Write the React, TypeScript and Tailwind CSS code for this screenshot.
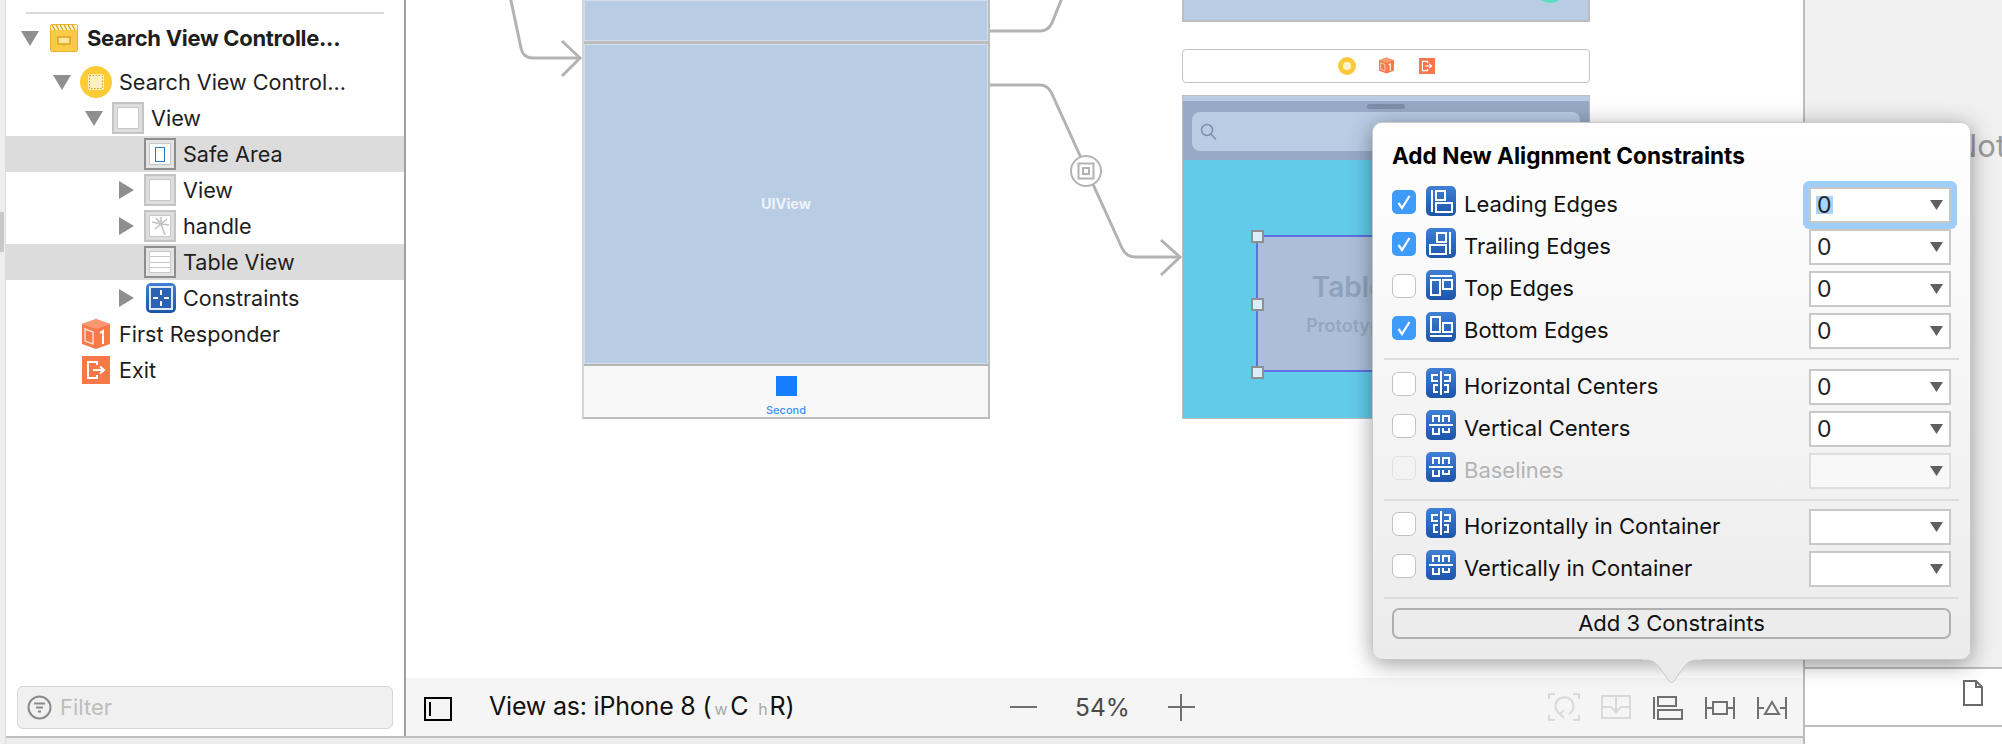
import type { ReactNode } from "react"

const sans = "font-['Inter','Noto_Sans',sans-serif]"

function Tri({ open }: { open: boolean }) {
  return open ? (
    <svg width="18" height="15" viewBox="0 0 18 15" className="block">
      <path d="M0 0H18L9 15Z" fill="#8f8f8f" />
    </svg>
  ) : (
    <svg width="15" height="18" viewBox="0 0 15 18" className="block">
      <path d="M0 0V18L15 9Z" fill="#8f8f8f" />
    </svg>
  )
}

function BoxIcon({ dark, children }: { dark?: boolean; children?: ReactNode }) {
  return (
    <div
      className={`w-[32px] h-[32px] shrink-0 border-2 flex items-center justify-center ${
        dark ? "border-[#8e8e8e] bg-[#e4e4e4]" : "border-[#c4c4c4] bg-[#dedede]"
      }`}
    >
      <div className="w-[22px] h-[22px] bg-white border border-[#c8c8c8] flex items-center justify-center overflow-hidden">
        {children}
      </div>
    </div>
  )
}

function StoryboardIcon() {
  return (
    <svg width="28" height="28" viewBox="0 0 28 28" className="block shrink-0">
      <rect x="0.5" y="0.5" width="27" height="27" rx="2" fill="#fbcb48" stroke="#e9b02e" />
      <rect x="1" y="1" width="26" height="5" fill="#fff3c4" />
      <path d="M2 1l3 5M6 1l3 5M10 1l3 5M14 1l3 5M18 1l3 5M22 1l3 5" stroke="#d99d1e" strokeWidth="1.2" />
      <rect x="8" y="13" width="12" height="7" fill="#fde59a" stroke="#d99d1e" strokeWidth="1.4" />
    </svg>
  )
}

function ControllerIcon() {
  return (
    <svg width="32" height="32" viewBox="0 0 32 32" className="block shrink-0">
      <circle cx="16" cy="16" r="16" fill="#fccb35" />
      <rect x="8" y="8" width="16" height="16" rx="2" fill="#fdf0c0" />
      <rect x="9.5" y="9.5" width="13" height="13" fill="none" stroke="#d9a21a" strokeWidth="1" strokeDasharray="1.5 1.5" />
    </svg>
  )
}

function CubeIcon({ size = 28 }: { size?: number }) {
  return (
    <svg width={size} height={size + 2} viewBox="0 0 28 30" className="block shrink-0">
      <path d="M14 0L28 5V25L14 30L0 25V5Z" fill="#f9794a" />
      <path d="M0 5L14 10L28 5L14 0Z" fill="#fb9a72" />
      <path d="M3 10L11 13V25L3 22Z" fill="none" stroke="#fff" strokeWidth="1.4" opacity="0.75" />
      <path d="M18 14L21 12V25" fill="none" stroke="#fff" strokeWidth="2" />
    </svg>
  )
}

function ExitIcon({ size = 28 }: { size?: number }) {
  return (
    <svg width={size} height={size} viewBox="0 0 28 28" className="block shrink-0">
      <rect width="28" height="28" fill="#f9784a" />
      <path d="M15 9V6H6V22H15V19" fill="none" stroke="#fff" strokeWidth="2" />
      <path d="M11 14H22M18 10.500L22 14L18 17.500" fill="none" stroke="#fff" strokeWidth="2" />
    </svg>
  )
}

function ConstraintsIcon() {
  return (
    <div className="w-[30px] h-[30px] shrink-0 rounded-[5px] bg-gradient-to-b from-[#3f80d6] to-[#1c55a9] flex items-center justify-center">
      <svg width="24" height="24" viewBox="0 0 24 24" className="block">
        <rect x="1" y="1" width="22" height="22" fill="#2a63b6" stroke="#dfe9f6" strokeWidth="2" />
        <path d="M12 4V9M12 15V20M4 12H9M15 12H20" stroke="#fff" strokeWidth="2" />
      </svg>
    </div>
  )
}

type TreeRow = {
  label: string
  indent: number
  tri?: "open" | "closed"
  icon: ReactNode
  iconAt: number
  textAt: number
  selected?: boolean
  bold?: boolean
  h: number
}

const tree: TreeRow[] = [
  { label: "Search View Controlle...", indent: 15, tri: "open", icon: <StoryboardIcon />, iconAt: 44, textAt: 81, bold: true, h: 52 },
  { label: "Search View Control...", indent: 47, tri: "open", icon: <ControllerIcon />, iconAt: 74, textAt: 113, h: 36 },
  { label: "View", indent: 79, tri: "open", icon: <BoxIcon />, iconAt: 106, textAt: 145, h: 36 },
  {
    label: "Safe Area",
    indent: 0,
    icon: (
      <BoxIcon dark>
        <div className="w-[10px] h-[15px] border border-[#2f78bc]" />
      </BoxIcon>
    ),
    iconAt: 138,
    textAt: 177,
    selected: true,
    h: 36,
  },
  { label: "View", indent: 113, tri: "closed", icon: <BoxIcon />, iconAt: 138, textAt: 177, h: 36 },
  {
    label: "handle",
    indent: 113,
    tri: "closed",
    icon: (
      <BoxIcon>
        <svg width="20" height="20" viewBox="0 0 20 20" fill="none" stroke="#c2c2c2" strokeWidth="1.600">
          <path d="M11 8L2 6M11 8L6 2M11 8L11 1M11 8L17 3M11 8L19 9M11 8L5 13M11 8L15 19" />
        </svg>
      </BoxIcon>
    ),
    iconAt: 138,
    textAt: 177,
    h: 36,
  },
  {
    label: "Table View",
    indent: 0,
    icon: (
      <BoxIcon dark>
        <div className="w-full h-full flex flex-col justify-evenly">
          <div className="h-px bg-[#c8c8c8]" />
          <div className="h-px bg-[#c8c8c8]" />
          <div className="h-px bg-[#c8c8c8]" />
        </div>
      </BoxIcon>
    ),
    iconAt: 138,
    textAt: 177,
    selected: true,
    h: 36,
  },
  { label: "Constraints", indent: 113, tri: "closed", icon: <ConstraintsIcon />, iconAt: 140, textAt: 177, h: 36 },
  { label: "First Responder", indent: 0, icon: <CubeIcon />, iconAt: 76, textAt: 113, h: 36 },
  { label: "Exit", indent: 0, icon: <ExitIcon />, iconAt: 76, textAt: 113, h: 36 },
]

function Sidebar() {
  return (
    <aside className="w-[400px] shrink-0 bg-white border-r-2 border-r-[#a0a0a0] flex flex-col">
      <div className="h-[2px] bg-[#d8d8d8] mt-[12px] ml-[20px] w-[358px]" />
      <div className="mt-[-2px]">
        {tree.map((r, i) => (
          <div
            key={i}
            className={`relative flex items-center ${r.selected ? "bg-[#dcdcdc]" : ""}`}
            style={{ height: r.h }}
          >
            {r.tri && (
              <div className="absolute" style={{ left: r.indent }}>
                <Tri open={r.tri === "open"} />
              </div>
            )}
            <div className="absolute" style={{ left: r.iconAt }}>
              {r.icon}
            </div>
            <span
              className={`absolute whitespace-nowrap text-[#1e1e1e] ${r.bold ? "text-[22px] font-bold tracking-[-0.3px]" : "text-[21.6px]"}`}
              style={{ left: r.textAt }}
            >
              {r.label}
            </span>
          </div>
        ))}
      </div>
      <div className="mt-auto mx-[11px] mb-[7px] h-[43px] rounded-[6px] bg-[#f0f0f0] border border-[#d6d6d6] flex items-center pl-[9px]">
        <svg width="25" height="25" viewBox="0 0 25 25" className="block shrink-0">
          <circle cx="12.500" cy="12.500" r="11" fill="none" stroke="#8a8a8a" strokeWidth="2" />
          <path d="M7 8.500H18M9 12.500H16M11 16.500H14" stroke="#8a8a8a" strokeWidth="2" />
        </svg>
        <span className="ml-[8px] text-[22px] text-[#bdbdbd]">Filter</span>
      </div>
    </aside>
  )
}

function Handle({ top }: { top: number }) {
  return (
    <div
      className="absolute left-[-7px] w-[13px] h-[13px] bg-[#d8eef9] border-2 border-[#8f8f8f]"
      style={{ top }}
    />
  )
}

function Canvas() {
  return (
    <div className="relative flex-1 bg-white overflow-hidden">
      {/* left scene */}
      <div className="absolute left-[176px] top-[-2px] w-[408px] h-[421px] border-2 border-[#bdbdbd] border-l-[#d4d4d4] flex flex-col">
        <div className="h-[41px] bg-[#b8cce4] border border-[#d2deed]" />
        <div className="h-[3px] bg-[#bdbdbd]" />
        <div className="flex-1 bg-[#b8cce4] border border-[#d2deed] flex items-center justify-center text-[14.5px] font-bold text-[#eef3fa]">
          UIView
        </div>
        <div className="h-[53px] bg-[#f8f8f8] border-t-2 border-t-[#b4b4b4] flex flex-col items-center">
          <div className="mt-[10px] w-[21px] h-[21px] bg-[#167dff]" />
          <span className="mt-[7px] text-[11px] leading-[14px] font-medium text-[#3b92fb]">Second</span>
        </div>
      </div>

      {/* right scene */}
      <div className="absolute left-[776px] top-[-2px] w-[408px] h-[24px] border-2 border-[#bdbdbd] bg-[#b8cce4] overflow-hidden">
        <div className="absolute left-[351px] top-[-27px] w-[30px] h-[30px] rounded-full bg-[#5bdcc0]" />
      </div>
      <div className="absolute left-[776px] top-[49px] w-[408px] h-[34px] rounded-[4px] border border-[#c4c4c4] bg-white">
        <div className="absolute left-[155px] top-[7px] w-[18px] h-[18px] rounded-full border-[5px] border-[#fcc93a] bg-[#fdf3cf]" />
        <div className="absolute left-[196px] top-[7px]">
          <CubeIcon size={15} />
        </div>
        <div className="absolute left-[236px] top-[8px]">
          <ExitIcon size={16} />
        </div>
      </div>
      <div className="absolute left-[776px] top-[95px] w-[408px] h-[324px] border border-[#bdbdbd] flex flex-col">
        <div className="h-[5px] bg-[#b8cce4]" />
        <div className="h-[59px] bg-[#97a9c6] relative">
          <div className="absolute left-[184px] top-[3px] w-[38px] h-[5px] rounded-full bg-[#7e8ea9]" />
          <div className="absolute left-[9px] top-[11px] w-[388px] h-[39px] rounded-[8px] bg-[#b8cce4] flex items-center pl-[8px]">
            <svg width="17" height="18" viewBox="0 0 17 18" className="block">
              <circle cx="7" cy="7" r="5.500" fill="none" stroke="#7f90ab" strokeWidth="1.500" />
              <path d="M11 11L16 16.500" stroke="#7f90ab" strokeWidth="1.500" />
            </svg>
          </div>
        </div>
        <div className="relative flex-1 bg-[#62cbe9]">
          <div className="absolute left-[73px] top-[75px] w-[260px] h-[137px] bg-[#acbfd8] border-2 border-[#5e70e2] flex flex-col items-center justify-center">
            <span className="text-[28px] leading-[34px] font-semibold text-[#8fa2bd]">Table View</span>
            <span className="mt-[11px] text-[18px] leading-[22px] font-semibold text-[#94a7c2]">Prototype Content</span>
            <Handle top={-7} />
            <Handle top={61} />
            <Handle top={129} />
          </div>
        </div>
      </div>

      {/* segues */}
      <svg width="1397" height="678" viewBox="0 0 1397 678" className="absolute left-0 top-0 pointer-events-none">
        <g fill="none" stroke="#b3b3b3" strokeWidth="3">
          <path d="M104 -4L115 48Q117 58 127 58H174" />
          <path d="M156 41L174 58L156 76" />
          <path d="M584 31H634Q642 31 646 23L656 -2" />
          <path d="M584 85H634Q642 85 646 94L716 248Q720 257 730 257H773" />
          <path d="M755 240L774 257L755 275" />
        </g>
        <circle cx="680" cy="171" r="15" fill="#fff" stroke="#b3b3b3" strokeWidth="2" />
        <rect x="672.500" y="163.500" width="15" height="15" fill="none" stroke="#b3b3b3" strokeWidth="2" />
        <rect x="677" y="168" width="6" height="6" fill="none" stroke="#b3b3b3" strokeWidth="2" />
      </svg>
    </div>
  )
}

function ToolIcon({ children }: { children: ReactNode }) {
  return (
    <svg width="32" height="28" viewBox="0 0 32 28" className="block" fill="none" strokeWidth="2">
      {children}
    </svg>
  )
}

function BottomBar() {
  return (
    <div className="h-[58px] shrink-0 bg-[#f5f5f5] flex items-center pl-[18px] pr-[15px] text-[#111]">
      <div className="w-[28px] h-[24px] border-2 border-black pl-[3px] py-[3px] mt-[3px]">
        <div className="w-[2px] h-full bg-black" />
      </div>
      <div className="ml-[37px] w-[320px] text-[25px] tracking-[-0.2px] whitespace-nowrap">
        View as: iPhone 8 (<span className="text-[16px] text-[#a8a8a8] ml-[3px] mr-[3px]">w</span>C
        <span className="text-[16px] text-[#a8a8a8] ml-[10px] mr-[2px]">h</span>R)
      </div>
      <div className="ml-[201px] w-[27px] h-[2px] bg-[#707070]" />
      <span className="ml-[38px] text-[24.5px] text-[#4a4a4a]">54%</span>
      <div className="ml-[38px] relative w-[27px] h-[27px]">
        <div className="absolute left-0 right-0 top-[12px] h-[2px] bg-[#707070]" />
        <div className="absolute top-0 bottom-0 left-[12px] w-[2px] bg-[#707070]" />
      </div>
      <div className="ml-auto flex gap-[20px] items-center">
        <ToolIcon>
          <g stroke="#d9d9d9">
            <path d="M1 6V1H7M25 1H31V6M1 22V27H7M25 27H31V22" />
            <path d="M21 21A9 9 0 1 0 12 21M12 21L16 17M12 21L16 25" />
          </g>
        </ToolIcon>
        <ToolIcon>
          <g stroke="#d9d9d9">
            <rect x="2" y="3" width="28" height="22" />
            <path d="M2 14H11M21 14H30M16 3V18M10 13L16 19L22 13" />
          </g>
        </ToolIcon>
        <ToolIcon>
          <g stroke="#707070">
            <path d="M2 4V26" />
            <rect x="6" y="4" width="18" height="9" />
            <rect x="6" y="17" width="24" height="9" />
          </g>
        </ToolIcon>
        <ToolIcon>
          <g stroke="#707070">
            <path d="M2 4V26M30 4V26M2 15H9M23 15H30" />
            <rect x="9" y="9" width="14" height="12" />
          </g>
        </ToolIcon>
        <ToolIcon>
          <g stroke="#707070">
            <path d="M2 4V26M30 4V26M2 15H8M24 15H30" />
            <path d="M16 9L23 21H9Z" />
          </g>
        </ToolIcon>
      </div>
    </div>
  )
}

function AlignIcon({ kind }: { kind: string }) {
  return (
    <div className="w-[30px] h-[30px] shrink-0 mt-[-1px] rounded-[5px] bg-gradient-to-b from-[#3f80d6] to-[#1c55a9]">
      <svg width="30" height="30" viewBox="0 0 30 30" className="block" fill="none" stroke="#fff" strokeWidth="2">
        {kind === "leading" && (
          <>
            <path d="M6 4V26" />
            <rect x="10" y="5" width="9" height="9" />
            <rect x="10" y="17" width="16" height="9" />
          </>
        )}
        {kind === "trailing" && (
          <>
            <path d="M24 4V26" />
            <rect x="11" y="5" width="9" height="9" />
            <rect x="4" y="17" width="16" height="9" />
          </>
        )}
        {kind === "top" && (
          <>
            <path d="M4 6H26" />
            <rect x="5" y="10" width="9" height="15" />
            <rect x="17" y="10" width="9" height="9" />
          </>
        )}
        {kind === "bottom" && (
          <>
            <path d="M4 24H26" />
            <rect x="5" y="5" width="9" height="15" />
            <rect x="17" y="11" width="9" height="9" />
          </>
        )}
        {kind === "h" && (
          <path d="M15 3V27M12 7H6V13H12M18 7H24V13H18M12 17H8V24H12M18 17H22V24H18" />
        )}
        {kind === "v" && (
          <path d="M3 15H27M7 12V6H13V12M17 12V6H23V12M7 18V24H13V18M17 18V22H23V18" />
        )}
      </svg>
    </div>
  )
}

function Check({ state }: { state: "on" | "off" | "disabled" }) {
  if (state === "on") {
    return (
      <div className="w-[24px] h-[24px] shrink-0 mt-[3px] rounded-[5px] bg-[#3f9bfa] flex items-center justify-center">
        <svg width="16" height="16" viewBox="0 0 16 16">
          <path d="M2.500 9L6 14L13.500 2" fill="none" stroke="#fff" strokeWidth="2.200" />
        </svg>
      </div>
    )
  }
  return (
    <div
      className={`w-[24px] h-[24px] shrink-0 mt-[3px] rounded-[6px] border ${
        state === "off" ? "bg-white border-[#c2c2c2]" : "bg-[#f3f3f3] border-[#dfdfdf]"
      }`}
    />
  )
}

function Field({ value, focused, disabled }: { value?: string; focused?: boolean; disabled?: boolean }) {
  return (
    <div
      className={`relative w-[142px] h-[36px] shrink-0 ml-auto border-2 flex items-center pl-[5px] text-[23px] text-[#222] ${
        disabled ? "bg-[#f8f8f8] border-[#dedede]" : "bg-white border-[#c8c8c8]"
      } ${focused ? "ring-[6px] ring-[#a0ccf8] rounded-[2px] z-10" : ""}`}
    >
      {value && <span className={focused ? "bg-[#a8d1fb] px-[1px] leading-[18px]" : "px-[1px]"}>{value}</span>}
      <svg width="13" height="10" viewBox="0 0 13 10" className="absolute right-[6px] top-[11px]">
        <path d="M0 0H13L6.500 10Z" fill="#5f5f5f" />
      </svg>
    </div>
  )
}

function AlignRow({
  label,
  kind,
  state = "off",
  value,
  focused,
}: {
  label: string
  kind: string
  state?: "on" | "off" | "disabled"
  value?: string
  focused?: boolean
}) {
  const disabled = state === "disabled"
  return (
    <div className="flex items-start h-[36px]">
      <Check state={state} />
      <div className="w-[10px] shrink-0" />
      <AlignIcon kind={kind} />
      <span className={`ml-[8px] text-[22px] leading-[34px] whitespace-nowrap ${disabled ? "text-[#b4b4b4]" : "text-[#111]"}`}>
        {label}
      </span>
      <Field value={value} focused={focused} disabled={disabled} />
    </div>
  )
}

function Sep({ mt, mb }: { mt: string; mb: string }) {
  return <div className={`h-[2px] mx-[-8px] bg-[#dcdcdc] ${mt} ${mb}`} />
}

function Popover() {
  return (
    <div className="absolute left-[1372px] top-[122px] w-[599px] z-20">
      <div className="rounded-[10px] border border-[#c9c9c9] bg-gradient-to-b from-white to-[#ebebeb] shadow-[0_4px_22px_rgba(0,0,0,0.38)] px-[19px] pt-[21px] pb-[20px]">
        <div className="text-[22.6px] leading-[24px] font-bold text-black mb-[19px] whitespace-nowrap">
          Add New Alignment Constraints
        </div>
        <div className="flex flex-col gap-[6px]">
          <AlignRow label="Leading Edges" kind="leading" state="on" value="0" focused />
          <AlignRow label="Trailing Edges" kind="trailing" state="on" value="0" />
          <AlignRow label="Top Edges" kind="top" value="0" />
          <AlignRow label="Bottom Edges" kind="bottom" state="on" value="0" />
        </div>
        <Sep mt="mt-[9px]" mb="mb-[9px]" />
        <div className="flex flex-col gap-[6px]">
          <AlignRow label="Horizontal Centers" kind="h" value="0" />
          <AlignRow label="Vertical Centers" kind="v" value="0" />
          <AlignRow label="Baselines" kind="v" state="disabled" />
        </div>
        <Sep mt="mt-[10px]" mb="mb-[8px]" />
        <div className="flex flex-col gap-[6px]">
          <AlignRow label="Horizontally in Container" kind="h" />
          <AlignRow label="Vertically in Container" kind="v" />
        </div>
        <Sep mt="mt-[10px]" mb="mb-[9px]" />
        <div className="h-[31px] rounded-[7px] border-2 border-[#b0b0b0] flex items-center justify-center text-[22px] text-[#111]">
          Add 3 Constraints
        </div>
      </div>
      <svg width="60" height="26" viewBox="0 0 60 26" className="absolute left-[270px] top-[537px]">
        <path d="M0 1C10 1 12 2 17 8L27 22Q29.500 25 32 22L42 8C47 2 49 1 60 1V0H0Z" fill="#ebebeb" />
        <path d="M0 1C10 1 12 2 17 8L27 22Q29.500 25 32 22L42 8C47 2 49 1 60 1" fill="none" stroke="#c9c9c9" />
      </svg>
    </div>
  )
}

function RightPane() {
  return (
    <div className="flex-1 flex flex-col overflow-hidden">
      <div className="h-[667px] bg-[#f0f0f0] pl-[149px] pt-[127px] text-[31px] leading-[38px] text-[#9a9a9a] whitespace-nowrap">
        Not Applicable
      </div>
      <div className="h-[60px] bg-white border-y-2 border-[#bdbdbd] flex justify-end items-center pr-[19px] pb-[8px]">
        <svg width="20" height="26" viewBox="0 0 20 26" className="block">
          <path d="M1 1H13L19 7V25H1ZM13 1V7H19" fill="none" stroke="#6a6a6a" strokeWidth="2" />
        </svg>
      </div>
      <div className="flex-1 bg-white" />
    </div>
  )
}

export default function App() {
  return (
    <div className={`relative w-[2002px] h-[744px] flex overflow-hidden bg-[#ececec] ${sans}`}>
      <div className="w-[6px] shrink-0 bg-[#eeeeee] border-r border-[#dddddd] flex flex-col pt-[212px]">
        <div className="h-[40px] w-[4px] bg-[#c8c8c8]" />
      </div>
      <div className="w-[1799px] shrink-0 flex flex-col border-r-2 border-[#bdbdbd]">
        <div className="h-[738px] flex border-b-2 border-[#c0c0c0]">
          <Sidebar />
          <div className="flex-1 flex flex-col min-w-0">
            <Canvas />
            <BottomBar />
          </div>
        </div>
        <div className="flex-1 bg-[#ececec]" />
      </div>
      <RightPane />
      <Popover />
    </div>
  )
}
